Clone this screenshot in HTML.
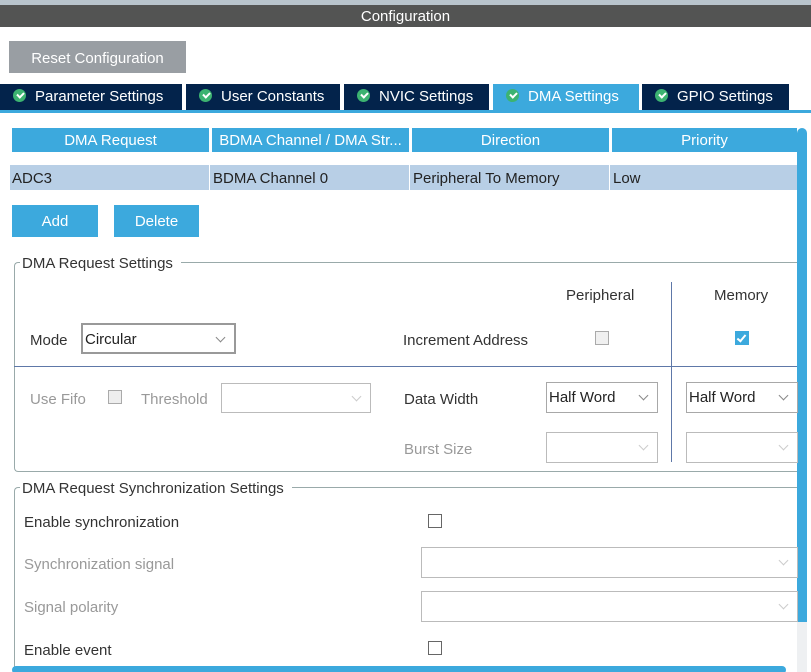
<!DOCTYPE html><html><head><style>
*{margin:0;padding:0;box-sizing:border-box}
html,body{width:811px;height:672px;overflow:hidden}
body{background:#fff;font-family:"Liberation Sans",sans-serif;font-size:15px;color:#333;position:relative}
.a{position:absolute;white-space:nowrap}
.tab{position:absolute;top:84px;height:26px;background:#03234b;color:#fff;line-height:26px;padding-left:13px}
.tab i{display:inline-block;width:13px;height:13px;border-radius:50%;background:#3cb371;vertical-align:-1px;margin-right:9px;position:relative}
.tab i:after{content:"";position:absolute;left:3.5px;top:2.5px;width:5px;height:3px;border-left:2px solid #fff;border-bottom:2px solid #fff;transform:rotate(-45deg)}
.th{position:absolute;top:128px;height:24px;background:#3ca9dd;color:#fff;text-align:center;line-height:26px}
.td{position:absolute;top:165px;height:25px;background:#b8cfe6;line-height:27px;padding-left:2px;color:#222}
.btn{position:absolute;top:205px;height:32px;background:#3ca9dd;color:#fff;text-align:center;line-height:33px}
.sel{position:absolute;border:1px solid #a8a8a8;background:#fff;line-height:30px;padding-left:2px;color:#222}
.sel:after{content:"";position:absolute;right:10px;top:9px;width:6px;height:6px;border-right:1px solid #888;border-bottom:1px solid #888;transform:rotate(45deg)}
.sel.d{border-color:#bbb}.sel.d:after{border-color:#ccc}
.cb{position:absolute;width:14px;height:14px;border:1px solid #666;background:#fff}
.g{color:#999}
</style></head><body>
<div class="a" style="left:0;top:0;width:811px;height:5px;background:#b8c4cc"></div>
<div class="a" style="left:0;top:5px;width:811px;height:22px;background:#535453;color:#fff;text-align:center;line-height:24px">Configuration</div>
<div class="a" style="left:9px;top:41px;width:177px;height:32px;background:#999ea3;color:#fff;text-align:center;line-height:35px">Reset Configuration</div>
<div class="tab" style="left:0;width:182px"><i></i>Parameter Settings</div>
<div class="tab" style="left:186px;width:154px"><i></i>User Constants</div>
<div class="tab" style="left:344px;width:145px"><i></i>NVIC Settings</div>
<div class="tab" style="left:493px;width:146px;background:#3ca9dd"><i></i>DMA Settings</div>
<div class="tab" style="left:642px;width:147px"><i></i>GPIO Settings</div>
<div class="a" style="left:0;top:110px;width:811px;height:3px;background:#3ca9dd"></div>
<div class="th" style="left:12px;width:197px">DMA Request</div>
<div class="th" style="left:212px;width:197px">BDMA Channel / DMA Str...</div>
<div class="th" style="left:412px;width:197px">Direction</div>
<div class="th" style="left:612px;width:185px">Priority</div>
<div class="td" style="left:10px;width:199px">ADC3</div>
<div class="td" style="left:210px;width:199px;padding-left:3px">BDMA Channel 0</div>
<div class="td" style="left:410px;width:199px;padding-left:3px">Peripheral To Memory</div>
<div class="td" style="left:610px;width:187px;padding-left:3px">Low</div>
<div class="a" style="left:797px;top:128px;width:10px;height:494px;background:#3ca9dd;border-radius:5px 5px 0 0"></div>
<div class="a" style="left:797px;top:622px;width:10px;height:50px;background:#eef0f2"></div>
<div class="btn" style="left:12px;width:86px">Add</div>
<div class="btn" style="left:114px;width:85px">Delete</div>
<div class="a" style="left:14px;top:262px;width:783px;height:210px;border:1px solid #9aa;border-right:none;border-radius:4px 0 0 4px"></div>
<div class="a" style="left:20px;top:255px;background:#fff;padding:0 8px 0 2px;line-height:18px">DMA Request Settings</div>
<div class="a" style="left:14px;top:366px;width:783px;height:1px;background:#5e78a8"></div>
<div class="a" style="left:671px;top:282px;width:1px;height:180px;background:#5e78a8"></div>
<div class="a" style="left:566px;top:287px">Peripheral</div>
<div class="a" style="left:714px;top:287px">Memory</div>
<div class="a" style="left:30px;top:332px">Mode</div>
<div class="sel" style="left:81px;top:323px;width:155px;height:31px;border:2px solid #999;line-height:29px">Circular</div>
<div class="a" style="left:403px;top:332px">Increment Address</div>
<div class="cb" style="left:595px;top:331px;border-color:#aaa;background:#f0f0f0"></div>
<div class="cb" style="left:735px;top:331px;border:none;background:#3ca9dd"><div style="position:absolute;left:4px;top:2px;width:5px;height:9px;border-right:2px solid #fff;border-bottom:2px solid #fff;transform:rotate(40deg)"></div></div>
<div class="a g" style="left:30px;top:391px">Use Fifo</div>
<div class="cb" style="left:108px;top:390px;border-color:#aaa;background:#eee"></div>
<div class="a g" style="left:141px;top:391px">Threshold</div>
<div class="sel d" style="left:221px;top:383px;width:150px;height:30px"></div>
<div class="a" style="left:404px;top:391px">Data Width</div>
<div class="sel" style="left:546px;top:382px;width:112px;height:31px">Half Word</div>
<div class="sel" style="left:686px;top:382px;width:112px;height:31px">Half Word</div>
<div class="a g" style="left:404px;top:441px">Burst Size</div>
<div class="sel d" style="left:546px;top:432px;width:112px;height:31px"></div>
<div class="sel d" style="left:686px;top:432px;width:112px;height:31px"></div>
<div class="a" style="left:14px;top:487px;width:783px;height:185px;border:1px solid #9aa;border-right:none;border-bottom:none;border-radius:4px 0 0 0"></div>
<div class="a" style="left:20px;top:480px;background:#fff;padding:0 8px 0 2px;line-height:18px">DMA Request Synchronization Settings</div>
<div class="a" style="left:24px;top:514px">Enable synchronization</div>
<div class="cb" style="left:428px;top:514px"></div>
<div class="a g" style="left:24px;top:556px">Synchronization signal</div>
<div class="sel d" style="left:421px;top:547px;width:377px;height:31px"></div>
<div class="a g" style="left:24px;top:599px">Signal polarity</div>
<div class="sel d" style="left:421px;top:591px;width:377px;height:31px"></div>
<div class="a" style="left:24px;top:642px">Enable event</div>
<div class="cb" style="left:428px;top:641px"></div>
<div class="a" style="left:12px;top:666px;width:774px;height:8px;background:#3ca9dd;border-radius:4px"></div>
</body></html>
